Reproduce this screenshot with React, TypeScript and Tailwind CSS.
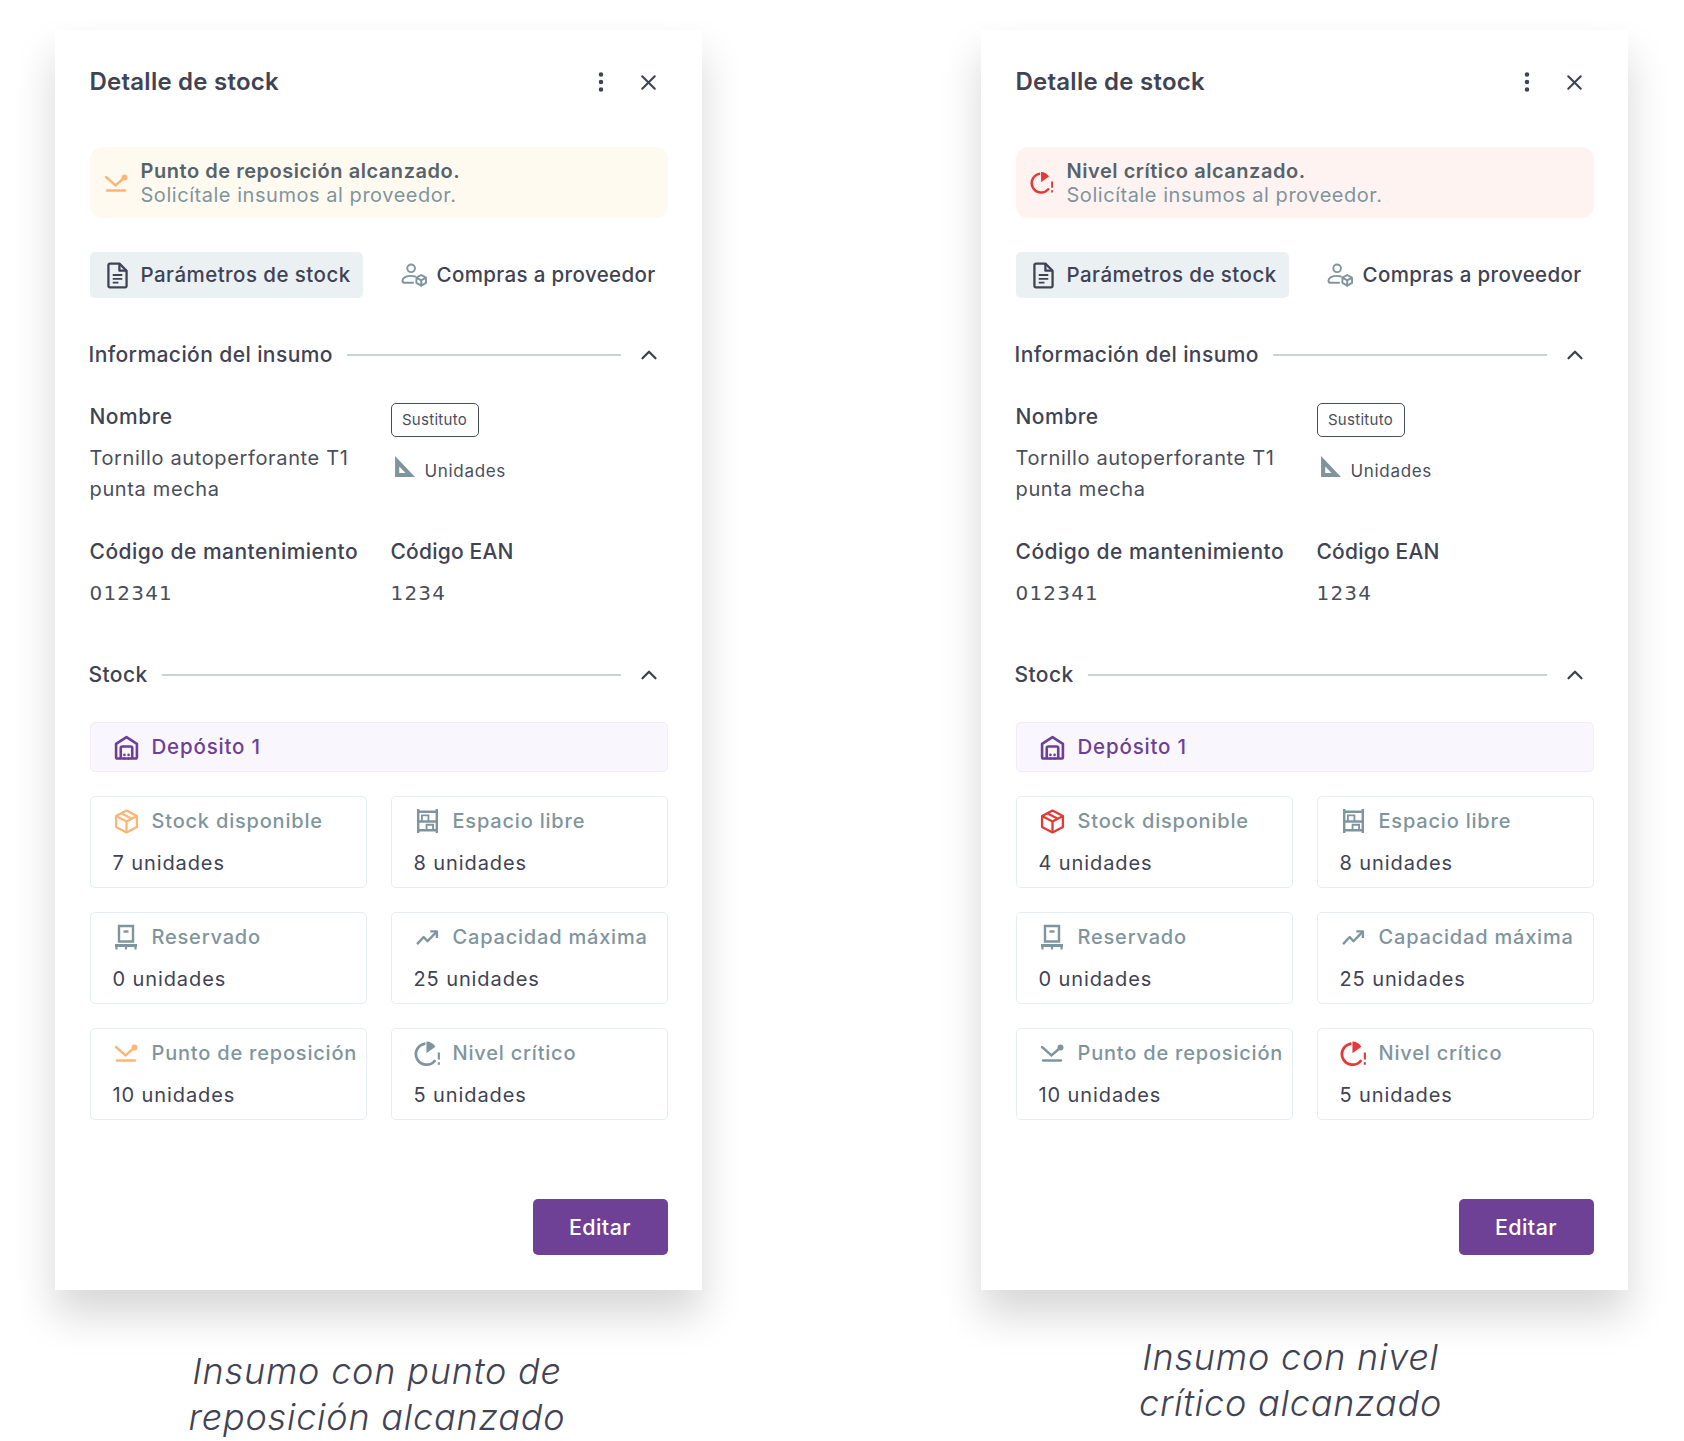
import type { ReactNode } from "react";
import { ChevronUp, MoreVertical, X } from "lucide-react";

type IconProps = { className?: string };

const ReorderIcon = ({ className }: IconProps) => (
  <svg viewBox="0 0 24 20" className={className} fill="none" stroke="currentColor" strokeWidth="2.4" strokeLinecap="round">
    <path d="M2 4l9.500 8.500L20 5" />
    <path d="M3 17.500h18" />
    <circle cx="20.500" cy="4.500" r="3" fill="currentColor" stroke="none" />
  </svg>
);

const CriticalIcon = ({ className }: IconProps) => (
  <svg viewBox="0 0 25 25" className={className} fill="none" stroke="currentColor" strokeWidth="2.600">
    <path d="M9.500 3.500a9.800 9.800 0 1 0 9.500 16" strokeLinecap="round" />
    <path d="M11.500 1.500c3.500 0 6.500 1.800 8.300 4.800l-8.300 6z" fill="currentColor" stroke="none" />
    <path d="M23 11.500v6.500M23 20.500v2.500" strokeWidth="2" />
  </svg>
);

const BoxIcon = ({ className }: IconProps) => (
  <svg viewBox="0 0 24 24" className={className} fill="none" stroke="currentColor" strokeWidth="2.200" strokeLinejoin="round">
    <path d="M12 1.500l10 5.300v10.400l-10 5.300-10-5.300V6.800z" />
    <path d="M2 6.800l10 5.200 10-5.200M12 12v10.500M7 4.100l10 5.300" />
  </svg>
);

const RackIcon = ({ className }: IconProps) => (
  <svg viewBox="0 0 24 28" className={className} fill="none" stroke="currentColor" strokeWidth="2.600">
    <path d="M2 1v26M22 1v26M2 4h20M2 14.500h20M2 24h20" />
    <path d="M6 14V8h7v6M11 24v-6h7v6" strokeWidth="2" />
  </svg>
);

const PalletIcon = ({ className }: IconProps) => (
  <svg viewBox="0 0 24 26" className={className} fill="none" stroke="currentColor" strokeWidth="2.400">
    <path d="M5 2h14v15.500H5z" />
    <path d="M9.500 7.500h5" />
    <path d="M1 21.500h22" strokeWidth="3" />
    <path d="M2.500 23v2.500M12 23v2.500M21.500 23v2.500" strokeWidth="2.200" />
  </svg>
);

const TrendIcon = ({ className }: IconProps) => (
  <svg viewBox="0 0 24 18" className={className} fill="none" stroke="currentColor" strokeWidth="2.500" strokeLinejoin="round">
    <path d="M1.500 16l7-7.500 4 4.500 9.500-10" />
    <path d="M15.500 2.500h7v7" />
  </svg>
);

const DocIcon = ({ className }: IconProps) => (
  <svg viewBox="0 0 22 28" className={className} fill="none" stroke="currentColor" strokeWidth="2.400" strokeLinejoin="round">
    <path d="M3 1.500h10l7.500 7.500v16a1.500 1.500 0 0 1-1.500 1.500H3A1.500 1.500 0 0 1 1.500 25V3A1.500 1.500 0 0 1 3 1.500z" />
    <path d="M13 1.500V9h7.500" />
    <path d="M6 13.500h10M6 17.500h10M6 21.500h6" strokeWidth="2" />
  </svg>
);

const SupplierIcon = ({ className }: IconProps) => (
  <svg viewBox="0 0 28 26" className={className} fill="none" stroke="currentColor" strokeWidth="2" strokeLinejoin="round" strokeLinecap="round">
    <circle cx="11" cy="5.500" r="4" />
    <path d="M15 14c-1.300-.4-2.700-.6-4-.6-5 0-9 2-9 5 0 1.500 1 2.200 2.500 2.200H13" />
    <path d="M21.500 12.500l5 2.800v5.400l-5 2.800-5-2.800v-5.400zM16.500 15.300l5 2.800 5-2.800M21.500 18.100v5.900" />
  </svg>
);

const SetSquareIcon = ({ className }: IconProps) => (
  <svg viewBox="0 0 20 20" className={className}>
    <path fillRule="evenodd" fill="currentColor" d="M1 0l19 20H1zM5 10v6.200h6z" />
  </svg>
);

const WarehouseIcon = ({ className }: IconProps) => (
  <svg viewBox="0 0 24 24" className={className} fill="none" stroke="currentColor" strokeWidth="2.500" strokeLinejoin="round">
    <path d="M2 8.500L12 2l10 6.500V21a1.500 1.500 0 0 1-1.500 1.500H3.500A1.500 1.500 0 0 1 2 21z" />
    <path d="M6.500 22.500V12.500a1.500 1.500 0 0 1 1.500-1.500h8a1.500 1.500 0 0 1 1.500 1.500v10" />
    <path d="M10 19v.1M14 19v.1M10 22.500v.1M14 22.500v.1" strokeLinecap="round" />
  </svg>
);

const SectionHeader = ({ title }: { title: string }) => (
  <div className="flex h-6 items-center pr-[6px] -ml-px">
    <span className="text-[21px] leading-6 font-medium tracking-[0.02em] text-[#3f4353]">{title}</span>
    <div className="ml-[14px] h-[2px] flex-1 bg-[#c7d5d7]" />
    <ChevronUp size={26} strokeWidth={2} className="ml-[15px] text-[#3a3e4d]" />
  </div>
);

const StatCard = ({ icon, label, value }: { icon: ReactNode; label: string; value: string }) => (
  <div className="h-[92px] rounded-[5px] border border-[#e6edf0] pt-[10px] pl-[22px]">
    <div className="flex h-[28px] items-center">
      <span className="flex w-[27px] shrink-0 justify-center">{icon}</span>
      <span className="ml-[12px] whitespace-nowrap text-[20px] leading-7 font-medium tracking-[0.04em] text-[#7f959d]">{label}</span>
    </div>
    <p className="mt-[14px] text-[20px] leading-[28px] tracking-[0.045em] text-[#3f4353]">{value}</p>
  </div>
);

type PanelProps = {
  alertTitle: string;
  alertBg: string;
  alertIcon: ReactNode;
  stockIcon: ReactNode;
  stockValue: string;
  reorderIcon: ReactNode;
  criticalIcon: ReactNode;
  caption: string[];
  captionClass: string;
};

const Panel = (p: PanelProps) => (
  <div className="w-[647px] shrink-0">
    <div className="flex h-[1260px] flex-col bg-white px-[34.5px] pt-[36px] shadow-[0_25px_40px_rgba(0,0,0,0.16)]">
      {/* Title */}
      <div className="flex h-8 items-center">
        <h2 className="flex-1 text-[24px] leading-8 font-semibold tracking-[0.01em] text-[#3f4353]">Detalle de stock</h2>
        <MoreVertical size={26} strokeWidth={2.2} className="mr-[22px] text-[#3f4353]" />
        <X size={25} strokeWidth={2} className="mr-[7px] text-[#3f4353]" />
      </div>

      {/* Alert */}
      <div className={`mt-[49px] flex h-[71px] items-center rounded-[12px] pl-[14px] ${p.alertBg}`}>
        <span className="flex w-[24px] shrink-0 justify-center">{p.alertIcon}</span>
        <div className="ml-[13px] text-[20px] leading-[24px] tracking-[0.027em]">
          <p className="font-semibold text-[#56636b]">{p.alertTitle}</p>
          <p className="text-[#7f959d]">Solicítale insumos al proveedor.</p>
        </div>
      </div>

      {/* Tabs */}
      <div className="mt-[34px] flex h-[46px] items-center">
        <div className="flex h-full w-[273px] items-center rounded-[5px] bg-[#ebf0f3] pl-[17px]">
          <DocIcon className="h-[27px] w-[21px] text-[#3f4353]" />
          <span className="ml-[13px] text-[20.500px] font-medium tracking-[0.022em] text-[#3f4353]">Parámetros de stock</span>
        </div>
        <SupplierIcon className="ml-[37px] h-[25px] w-[28px] text-[#7f959d]" />
        <span className="ml-[9px] text-[20.500px] font-medium tracking-[0.018em] text-[#3f4353]">Compras a proveedor</span>
      </div>

      <div className="mt-[45px]">
        <SectionHeader title="Información del insumo" />
      </div>

      {/* Supply info */}
      <div className="mt-[36px] grid grid-cols-2 gap-x-[24px] gap-y-[33px]">
        <div>
          <p className="text-[21px] leading-7 font-medium tracking-[0.023em] text-[#3f4353]">Nombre</p>
          <p className="mt-[12px] text-[20px] leading-[31px] tracking-[0.032em] text-[#4a4e5c]">
            Tornillo autoperforante T1
            <br />
            punta mecha
          </p>
        </div>
        <div>
          <span className="flex h-[34px] w-[88px] items-center justify-center rounded-[5px] border border-[#4a4e5c] text-[15px] tracking-[0.02em] text-[#4a4e5c]">
            Sustituto
          </span>
          <div className="mt-[19px] flex items-start">
            <SetSquareIcon className="ml-[3px] h-[21px] w-[21px] text-[#7f959d]" />
            <span className="ml-[10px] mt-[3px] text-[17px] leading-6 tracking-[0.04em] text-[#4a4e5c]">Unidades</span>
          </div>
        </div>
        <div>
          <p className="whitespace-nowrap text-[21px] leading-7 font-medium tracking-[0.023em] text-[#3f4353]">Código de mantenimiento</p>
          <p className="mt-[12px] font-['DejaVu_Sans',sans-serif] text-[20px] leading-[31px] tracking-[0.06em] text-[#4a4e5c]">012341</p>
        </div>
        <div>
          <p className="text-[21px] leading-7 font-medium tracking-[0.01em] text-[#3f4353]">Código EAN</p>
          <p className="mt-[12px] font-['DejaVu_Sans',sans-serif] text-[20px] leading-[31px] tracking-[0.06em] text-[#4a4e5c]">1234</p>
        </div>
      </div>

      <div className="mt-[54px]">
        <SectionHeader title="Stock" />
      </div>

      {/* Warehouse */}
      <div className="mt-[35px] flex h-[50px] items-center rounded-[5px] border border-[#f0edf7] bg-[#f9f7fd] pl-[23px]">
        <WarehouseIcon className="h-[25px] w-[25px] text-[#6c3f98]" />
        <span className="ml-[13px] text-[20.500px] font-medium tracking-[0.04em] text-[#6c3f98]">Depósito 1</span>
      </div>

      <div className="mt-[24px] grid grid-cols-2 gap-[24px]">
        <StatCard icon={p.stockIcon} label="Stock disponible" value={p.stockValue} />
        <StatCard icon={<RackIcon className="h-[26px] w-[23px] text-[#7f959d]" />} label="Espacio libre" value="8 unidades" />
        <StatCard icon={<PalletIcon className="h-[26px] w-[24px] text-[#7f959d]" />} label="Reservado" value="0 unidades" />
        <StatCard icon={<TrendIcon className="h-[17px] w-[24px] text-[#7f959d]" />} label="Capacidad máxima" value="25 unidades" />
        <StatCard icon={p.reorderIcon} label="Punto de reposición" value="10 unidades" />
        <StatCard icon={p.criticalIcon} label="Nivel crítico" value="5 unidades" />
      </div>

      <div className="mt-[79px] flex justify-end">
        <button className="h-[56px] w-[135px] rounded-[5px] bg-[#6f4196] text-[21.500px] font-medium tracking-[0.02em] text-white">Editar</button>
      </div>
    </div>

    <p className={`text-center text-[36px] leading-[46px] font-light tracking-[0.022em] text-[#3f4353] italic ${p.captionClass}`}>
      {p.caption[0]}
      <br />
      {p.caption[1]}
    </p>
  </div>
);

export default function App() {
  return (
    <div className="flex h-[1441px] gap-[279px] overflow-hidden bg-white pt-[30px] pl-[55px] font-['Inter',sans-serif]">
      <Panel
        alertTitle="Punto de reposición alcanzado."
        alertBg="bg-[#fffaf0]"
        alertIcon={<ReorderIcon className="h-[20px] w-[24px] text-[#fbb574]" />}
        stockIcon={<BoxIcon className="h-[25px] w-[25px] text-[#fbb574]" />}
        stockValue="7 unidades"
        reorderIcon={<ReorderIcon className="h-[20px] w-[24px] text-[#fbb574]" />}
        criticalIcon={<CriticalIcon className="h-[27px] w-[27px] text-[#7f959d]" />}
        caption={["Insumo con punto de", "reposición alcanzado"]}
        captionClass="mt-[58px] pr-[3px]"
      />
      <Panel
        alertTitle="Nivel crítico alcanzado."
        alertBg="bg-[#fff3f2]"
        alertIcon={<CriticalIcon className="h-[27px] w-[27px] text-[#e53935]" />}
        stockIcon={<BoxIcon className="h-[25px] w-[25px] text-[#e53935]" />}
        stockValue="4 unidades"
        reorderIcon={<ReorderIcon className="h-[20px] w-[24px] text-[#7f959d]" />}
        criticalIcon={<CriticalIcon className="h-[27px] w-[27px] text-[#e53935]" />}
        caption={["Insumo con nivel", "crítico alcanzado"]}
        captionClass="mt-[44px] pr-[28px]"
      />
    </div>
  );
}
